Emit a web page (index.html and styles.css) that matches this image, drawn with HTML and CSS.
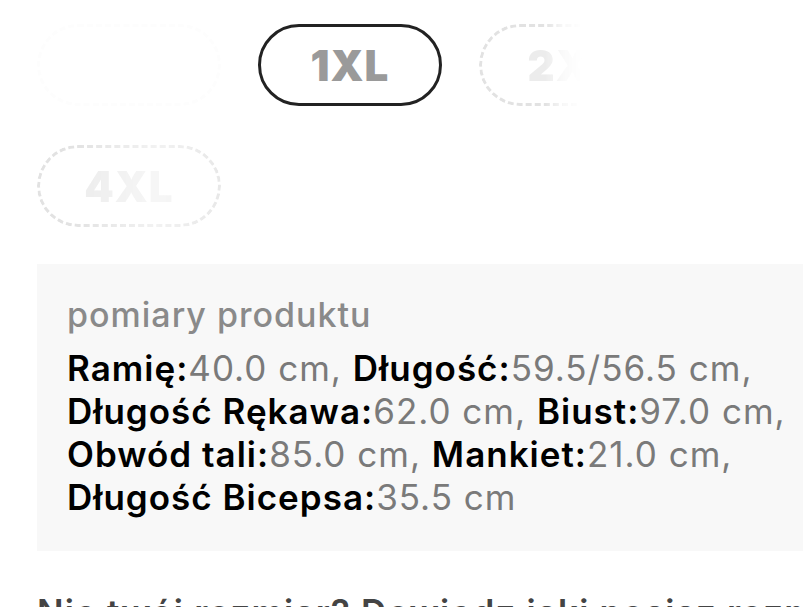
FILE: index.html
```html
<!DOCTYPE html>
<html>
<head>
  <meta charset="UTF-8">
  <title>Rozmiar</title>
  <link rel="stylesheet" href="styles.css">
</head>
<body>
  <div class="page">
    <!-- Size picker -->
    <div class="sizes">
      <div class="size-pill ghost">XL</div>
      <div class="size-pill selected">1XL</div>
      <div class="size-pill disabled fade-right">2XL</div>
      <div class="size-pill hidden">3XL</div>
      <div class="size-pill disabled fade-soft">4XL</div>
    </div>
    <!-- Product measurements -->
    <div class="measures">
      <div class="measures-title">pomiary produktu</div>
      <p class="measures-list">
        <b>Ramię:</b>40.0 cm, <b>Długość:</b>59.5/56.5 cm,
        <b>Długość Rękawa:</b>62.0 cm, <b>Biust:</b>97.0 cm,
        <b>Obwód tali:</b>85.0 cm, <b>Mankiet:</b>21.0 cm,
        <b>Długość Bicepsa:</b>35.5 cm
      </p>
    </div>
    <h2 class="size-help">Nie twój rozmiar? Dowiedz jaki nosisz rozmiar</h2>
  </div>
</body>
</html>
```

FILE: styles.css
```css
html, body {
  margin: 0;
  background: #fff;
  overflow: hidden;
}
.page {
  width: 900px;
  padding: 24px 0 0 37px;
  font-family: Inter, "Noto Sans", sans-serif;
}
/* Size pills */
.sizes {
  display: flex;
  flex-wrap: wrap;
  gap: 39px 37px;
  width: 860px;
}
.size-pill {
  box-sizing: border-box;
  width: 184px;
  height: 82px;
  border-radius: 41px;
  display: flex;
  align-items: center;
  justify-content: center;
  font-size: 42px;
  font-weight: 900;
  letter-spacing: 1px;
}
.size-pill.selected {
  border: 3px solid #222;
  color: #9a9a9a;
}
.size-pill.disabled {
  border: 3px dashed #e2e2e2;
  color: #ececec;
}
.size-pill.ghost {
  border: 3px dashed #fdfdfd;
  color: #fff;
}
.size-pill.hidden {
  visibility: hidden;
}
.fade-right {
  -webkit-mask-image: linear-gradient(to right, #000 36%, rgba(0,0,0,0.25) 46%, transparent 56%);
  mask-image: linear-gradient(to right, #000 36%, rgba(0,0,0,0.25) 46%, transparent 56%);
}
.fade-soft {
  -webkit-mask-image: linear-gradient(to right, #000 20%, rgba(0,0,0,0.45) 65%, rgba(0,0,0,0.8) 100%);
  mask-image: linear-gradient(to right, #000 20%, rgba(0,0,0,0.45) 65%, rgba(0,0,0,0.8) 100%);
}
/* Measurements box */
.measures {
  margin-top: 37px;
  width: 800px;
  box-sizing: border-box;
  padding: 28px 20px 32px 30px;
  background: #f8f8f8;
}
.measures-title {
  color: #8a8a8a;
  font-size: 34px;
  font-weight: 500;
  letter-spacing: 1px;
  line-height: 46px;
}
.measures-list {
  margin: 9px 0 0;
  font-size: 35px;
  letter-spacing: 1px;
  line-height: 43px;
  color: #7a7a7a;
}
.measures-list b {
  color: #000;
  font-weight: 600;
}
.size-help {
  margin: 40px 0 0;
  color: #444;
  font-size: 35px;
  font-weight: 600;
  letter-spacing: 1.2px;
  white-space: nowrap;
}
```
